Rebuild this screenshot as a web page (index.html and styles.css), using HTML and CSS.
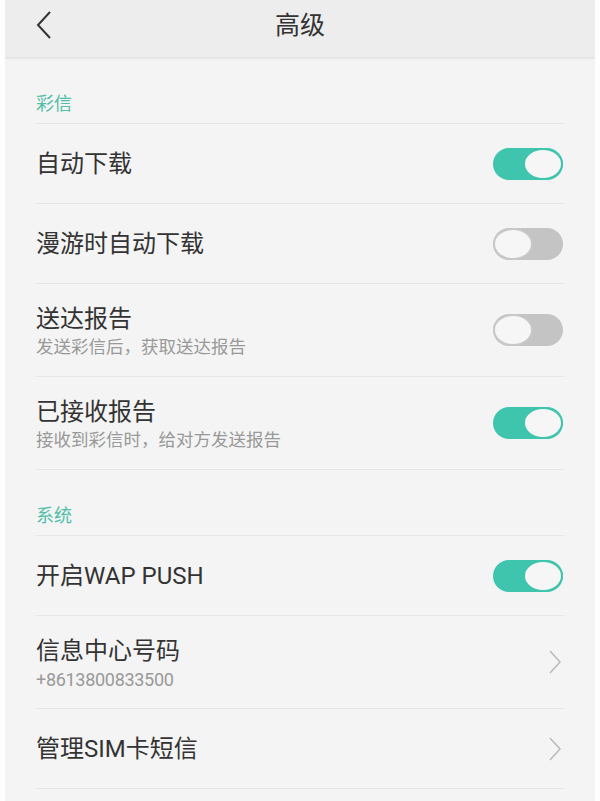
FILE: index.html
```html
<!DOCTYPE html>
<html lang="zh-CN">
<head>
<meta charset="utf-8">
<title>高级</title>
<link rel="stylesheet" href="styles.css">
</head>
<body>
<div class="phone">
  <header class="topbar">
    <svg class="back" width="18" height="30" viewBox="0 0 18 30"><path d="M15 2 L3 15 L15 28" fill="none" stroke="#333" stroke-width="2"/></svg>
    <h1 class="title">高级</h1>
  </header>
  <main class="content">
    <div class="section">彩信</div>
    <div class="row">
      <div class="texts"><div class="label">自动下载</div></div>
      <span class="switch on"><span class="knob"></span></span>
    </div>
    <div class="row">
      <div class="texts"><div class="label">漫游时自动下载</div></div>
      <span class="switch off"><span class="knob"></span></span>
    </div>
    <div class="row two">
      <div class="texts"><div class="label">送达报告</div><div class="sub">发送彩信后，获取送达报告</div></div>
      <span class="switch off"><span class="knob"></span></span>
    </div>
    <div class="row two">
      <div class="texts"><div class="label">已接收报告</div><div class="sub">接收到彩信时，给对方发送报告</div></div>
      <span class="switch on"><span class="knob"></span></span>
    </div>
    <div class="section">系统</div>
    <div class="row">
      <div class="texts"><div class="label">开启WAP PUSH</div></div>
      <span class="switch on"><span class="knob"></span></span>
    </div>
    <div class="row two">
      <div class="texts"><div class="label">信息中心号码</div><div class="sub num">+8613800833500</div></div>
      <svg class="chev" width="14" height="24" viewBox="0 0 14 24"><path d="M2 1 L12 12 L2 23" fill="none" stroke="#b9b9b9" stroke-width="1.5"/></svg>
    </div>
    <div class="row">
      <div class="texts"><div class="label">管理SIM卡短信</div></div>
      <svg class="chev" width="14" height="24" viewBox="0 0 14 24"><path d="M2 1 L12 12 L2 23" fill="none" stroke="#b9b9b9" stroke-width="1.5"/></svg>
    </div>
  </main>
</div>
</body>
</html>
```
FILE: styles.css
```css
html, body {
  margin: 0;
  padding: 0;
  background: #ffffff;
}
body {
  font-family: Roboto, "Noto Sans CJK SC", sans-serif;
  color: #333333;
}
.phone {
  margin: 0 5px;
  height: 801px;
  background: #f4f4f4;
  overflow: hidden;
}
.topbar {
  height: 57px;
  background: #ededed;
  border-bottom: 1px solid #e2e2e2;
  box-shadow: 0 1px 2px rgba(0,0,0,0.06);
  display: flex;
  align-items: center;
  justify-content: center;
  position: relative;
}
.back {
  position: absolute;
  left: 30px;
  top: 10px;
}
.title {
  margin: 0;
  font-size: 25px;
  font-weight: normal;
  color: #333;
  line-height: 1;
  position: relative;
  top: -3px;
}
.content {
  padding: 0 31px;
}
.section {
  font-family: "Noto Sans CJK SC", sans-serif;
  font-size: 18px;
  line-height: 22px;
  color: #4fbea6;
  padding: 33px 0 10px;
  border-bottom: 1px solid #e6e6e6;
}
.row {
  height: 79px;
  display: flex;
  align-items: center;
  justify-content: space-between;
  border-bottom: 1px solid #e6e6e6;
}
.row.two {
  height: 92px;
  align-items: center;
}
.texts {
  display: flex;
  flex-direction: column;
}
.label {
  font-size: 24px;
  line-height: 32px;
  color: #333;
}
.row.two .texts {
  padding-top: 3px;
}
.sub {
  font-size: 17.5px;
  line-height: 25px;
  color: #999999;
}
.sub.num {
  font-size: 18px;
  letter-spacing: -0.3px;
}
.switch {
  width: 70px;
  height: 32px;
  border-radius: 16px;
  display: flex;
  align-items: center;
  box-sizing: border-box;
  margin-right: 1px;
}
.switch.on {
  background: #3fc5ad;
  justify-content: flex-end;
}
.switch.off {
  background: #c4c4c4;
  justify-content: flex-start;
}
.knob {
  width: 40px;
  height: 32px;
  border-radius: 50%;
  background: #f6f6f6;
  box-sizing: border-box;
}
.switch.on .knob {
  border: 2px solid #3fc5ad;
}
.switch.off .knob {
  border: 2px solid #c8c8c8;
}
.chev {
  margin-right: 2px;
}
```
